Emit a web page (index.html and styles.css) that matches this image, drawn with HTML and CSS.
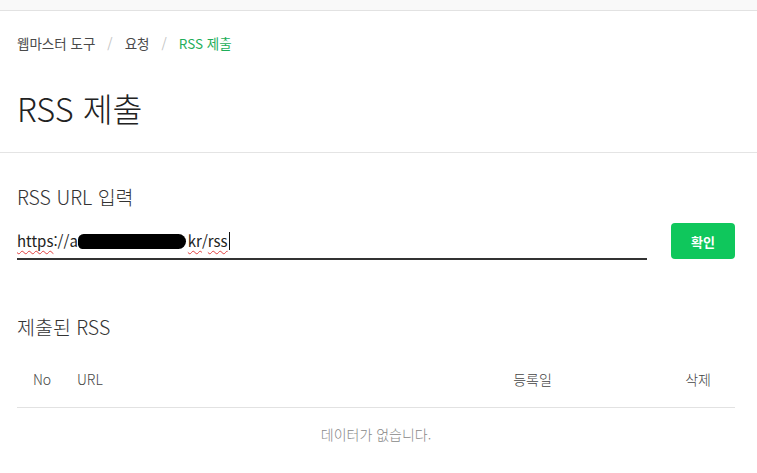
FILE: index.html
```html
<!DOCTYPE html>
<html lang="ko">
<head>
<meta charset="utf-8">
<title>RSS 제출</title>
<link rel="stylesheet" href="styles.css">
</head>
<body>
<div class="topbar"></div>
<header class="head">
  <nav class="crumbs">
    <span class="crumb">웹마스터 도구</span>
    <span class="sep">/</span>
    <span class="crumb">요청</span>
    <span class="sep">/</span>
    <span class="crumb current">RSS 제출</span>
  </nav>
  <h1 class="title">RSS 제출</h1>
</header>
<main class="content">
  <h2 class="label">RSS URL 입력</h2>
  <div class="form-row">
    <div class="url-field"><span class="typo">https</span>://a<span class="blot"></span><span class="typo">kr</span>/<span class="typo">rss</span><span class="caret"></span></div>
    <button class="btn">확인</button>
  </div>
  <h2 class="label list-title">제출된 RSS</h2>
  <div class="table">
    <div class="thead">
      <div class="c-no">No</div>
      <div class="c-url">URL</div>
      <div class="c-date">등록일</div>
      <div class="c-del">삭제</div>
    </div>
    <div class="empty">데이터가 없습니다.</div>
  </div>
</main>
</body>
</html>
```
FILE: styles.css
```css
* { box-sizing: border-box; }
body {
  margin: 0;
  background: #fff;
  font-family: "Noto Sans CJK KR", "Noto Sans", sans-serif;
  color: #333;
}
.topbar {
  height: 11px;
  background: #f9f9f9;
  border-bottom: 1px solid #e2e2e2;
}
.head {
  padding: 22px 17px 24px;
  border-bottom: 1px solid #e4e4e4;
}
.crumbs {
  display: flex;
  gap: 12px;
  height: 20px;
  align-items: center;
  font-size: 13.5px;
}
.crumb { color: #4a4a4a; }
.sep { color: #c4c4c4; }
.current { color: #1fae5a; }
.title {
  margin: 35px 0 0;
  height: 40px;
  line-height: 40px;
  font-size: 32.5px;
  font-weight: 300;
  color: #222;
}
.content {
  padding: 31px 22px 0 17px;
}
.label {
  margin: 0;
  height: 26px;
  line-height: 26px;
  font-size: 19.5px;
  font-weight: 300;
  color: #333;
}
.form-row {
  display: flex;
  gap: 24px;
  margin-top: 13px;
  align-items: flex-start;
}
.url-field {
  width: 630px;
  height: 37px;
  border-bottom: 2px solid #333;
  display: flex;
  align-items: center;
  font-size: 15px;
  color: #222;
}
.typo {
  text-decoration: underline wavy #e04040;
  text-decoration-thickness: 1px;
  text-underline-offset: 3px;
}
.blot {
  display: inline-block;
  width: 108px;
  height: 15px;
  background: #000;
  border-radius: 6px 8px 8px 5px;
  margin: 0 2px 0 0;
  transform: translateY(1px);
}
.caret {
  display: inline-block;
  width: 1px;
  height: 18px;
  background: #111;
  margin-left: 1px;
}
.btn {
  width: 64px;
  height: 36px;
  border: 0;
  border-radius: 4px;
  background: #0fc75c;
  color: #fff;
  font-family: inherit;
  font-size: 13px;
  font-weight: 700;
}
.list-title {
  margin-top: 54px;
}
.table {
  margin-top: 10px;
}
.thead {
  display: grid;
  grid-template-columns: 50px 1fr 120px 143px;
  height: 58px;
  align-items: center;
  border-bottom: 1px solid #e2e2e2;
  font-size: 14px;
  font-weight: 300;
  color: #444;
}
.c-no { text-align: center; }
.c-url { padding-left: 10px; }
.c-date { text-align: center; padding-left: 1px; }
.c-del { text-align: right; padding-right: 24px; }
.empty {
  height: 52px;
  line-height: 52px;
  text-align: center;
  font-size: 14px;
  font-weight: 300;
  color: #888;
}
```
